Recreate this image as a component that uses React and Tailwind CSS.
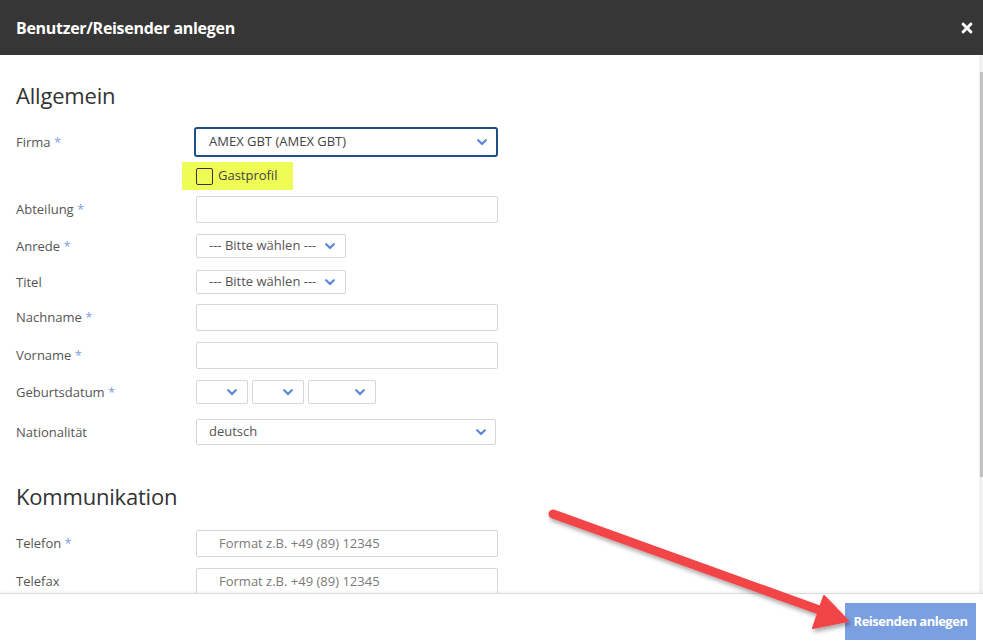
import React from 'react';
import { FaTimes } from 'react-icons/fa';

function Chevron() {
  return (
    <svg width="10" height="7" viewBox="0 0 10 7" className="shrink-0">
      <polyline points="1.2,1.2 5,5 8.8,1.2" fill="none" stroke="#5b8ad9" strokeWidth="2.2" strokeLinecap="round" strokeLinejoin="round" />
    </svg>
  );
}

function Label({ text, required }) {
  return (
    <div className="w-[180px] shrink-0 pt-[1px] text-[13px] text-[#555]">
      {text}
      {required && <span className="text-[#7d9ee3]"> *</span>}
    </div>
  );
}

function TextBox({ placeholder, h = 'h-[27px]' }) {
  return (
    <div className={`w-[302px] ${h} border border-[#d6d6d6] rounded-[2px] flex items-center pl-[22px] text-[13px] text-[#7a7a7a]`}>
      {placeholder}
    </div>
  );
}

function Select({ value, w, h = 'h-[24px]', pr = 'pr-[10px]' }) {
  return (
    <div className={`${w} ${h} border border-[#d6d6d6] rounded-[2px] flex items-center justify-between pl-[12px] ${pr} text-[13px] text-[#555]`}>
      <span>{value}</span>
      <Chevron />
    </div>
  );
}

function Row({ mt, label, required, children }) {
  return (
    <div className={`flex items-center ${mt}`}>
      <Label text={label} required={required} />
      {children}
    </div>
  );
}

function Arrow() {
  return (
    <svg className="absolute inset-0 pointer-events-none" width="983" height="644">
      <defs>
        <filter id="arrowShadow" x="-10%" y="-10%" width="120%" height="130%">
          <feDropShadow dx="1.5" dy="3" stdDeviation="2" floodColor="#000" floodOpacity="0.35" />
        </filter>
      </defs>
      <g filter="url(#arrowShadow)" fill="#f24447" stroke="#f24447">
        <line x1="553" y1="514" x2="822" y2="611" strokeWidth="9" strokeLinecap="round" />
        <polygon points="824,596 848,621 813,628" strokeWidth="2" strokeLinejoin="round" />
      </g>
    </svg>
  );
}

export default function App() {
  return (
    <div className="relative w-[983px] h-[644px] flex flex-col bg-white overflow-hidden font-['Open_Sans',sans-serif]">
      {/* Kopfzeile */}
      <div className="h-[55px] shrink-0 bg-[#363636] flex items-center justify-between pl-4 pr-[8px]">
        <h1 className="text-[16px] font-bold text-white tracking-[-0.3px]">Benutzer/Reisender anlegen</h1>
        <FaTimes className="text-white" size={16} />
      </div>

      {/* Formular */}
      <div className="flex-1 flex min-h-0">
        <div className="flex-1 overflow-hidden pl-4">
          <h2 className="mt-[25px] text-[22px] leading-[30px] text-[#333] tracking-[-0.2px]">Allgemein</h2>

          <Row mt="mt-[17px]" label="Firma" required>
            <div className="ml-[-2px] w-[304px] h-[30px] border-2 border-[#1d4f86] rounded-[3px] flex items-center justify-between pl-[13px] pr-[9px] text-[13px] text-[#444]">
              <span>AMEX GBT (AMEX GBT)</span>
              <Chevron />
            </div>
          </Row>

          <div className="flex mt-[5px]">
            <div className="ml-[166px] w-[111px] h-[28px] bg-[#eefc55] flex items-center pl-[14px] gap-[5px]">
              <div className="w-[17px] h-[17px] border border-[#333] rounded-[2px] bg-transparent" />
              <span className="text-[13px] text-[#444]">Gastprofil</span>
            </div>
          </div>

          <Row mt="mt-[6px]" label="Abteilung" required>
            <TextBox />
          </Row>
          <Row mt="mt-[11px]" label="Anrede" required>
            <Select value="--- Bitte wählen ---" w="w-[150px]" />
          </Row>
          <Row mt="mt-[12px]" label="Titel">
            <Select value="--- Bitte wählen ---" w="w-[150px]" />
          </Row>
          <Row mt="mt-[10px]" label="Nachname" required>
            <TextBox />
          </Row>
          <Row mt="mt-[11px]" label="Vorname" required>
            <TextBox />
          </Row>
          <Row mt="mt-[11px]" label="Geburtsdatum" required>
            <div className="flex gap-[4px]">
              <Select value="" w="w-[52px]" />
              <Select value="" w="w-[52px]" />
              <Select value="" w="w-[68px]" />
            </div>
          </Row>
          <Row mt="mt-[15px]" label="Nationalität">
            <Select value="deutsch" w="w-[300px]" h="h-[26px]" pr="pr-[9px]" />
          </Row>

          <h2 className="mt-[36px] text-[22px] leading-[30px] text-[#333] tracking-[-0.2px]">Kommunikation</h2>

          <Row mt="mt-[19px]" label="Telefon" required>
            <TextBox placeholder="Format z.B. +49 (89) 12345" />
          </Row>
          <Row mt="mt-[11px]" label="Telefax">
            <TextBox placeholder="Format z.B. +49 (89) 12345" />
          </Row>
        </div>

        {/* Scrollleiste */}
        <div className="w-[4px] shrink-0 bg-[#f1f1f1] pt-[17px] flex justify-end">
          <div className="w-[3px] h-[405px] bg-[#c3c3c3]" />
        </div>
      </div>

      {/* Fußzeile */}
      <div className="h-[51px] shrink-0 border-t border-[#dcdcdc] shadow-[0_-1px_3px_rgba(0,0,0,0.06)] flex items-start justify-end pt-[9px] pr-[7px]">
        <button className="w-[131px] h-[37px] bg-[#7aa0e2] text-white text-[13px] font-bold tracking-[-0.5px]">
          Reisenden anlegen
        </button>
      </div>

      <Arrow />
    </div>
  );
}
